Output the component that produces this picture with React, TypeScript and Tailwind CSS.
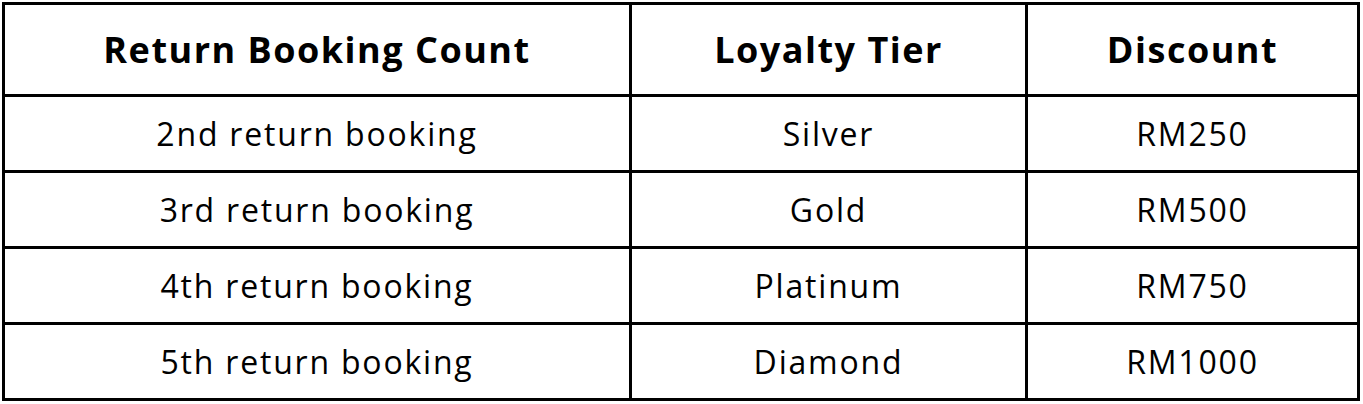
const rows = [
  { count: '2nd return booking', tier: 'Silver', discount: 'RM250' },
  { count: '3rd return booking', tier: 'Gold', discount: 'RM500' },
  { count: '4th return booking', tier: 'Platinum', discount: 'RM750' },
  { count: '5th return booking', tier: 'Diamond', discount: 'RM1000' },
];

const headers = ['Return Booking Count', 'Loyalty Tier', 'Discount'];

export default function App() {
  return (
    <div className="min-h-[404px] w-full bg-white pl-[2px] pt-[2px] font-['Open_Sans','Noto_Sans',sans-serif] text-black">
      <div className="grid w-fit grid-cols-[624px_393px_329px] grid-rows-[89px_73px_73px_73px_73px] gap-[3px] bg-black p-[3px]">
        {headers.map((h) => (
          <div key={h} className="flex items-center justify-center bg-white text-[36px] font-bold tracking-[1.5px]">
            {h}
          </div>
        ))}
        {rows.map((r) => (
          <>
            <div key={r.count} className="flex items-center justify-center bg-white text-[32px] tracking-[1.8px]">
              {r.count}
            </div>
            <div key={r.tier} className="flex items-center justify-center bg-white text-[32px] tracking-[1.8px]">
              {r.tier}
            </div>
            <div key={r.discount} className="flex items-center justify-center bg-white text-[32px] tracking-[1.8px]">
              {r.discount}
            </div>
          </>
        ))}
      </div>
    </div>
  );
}
